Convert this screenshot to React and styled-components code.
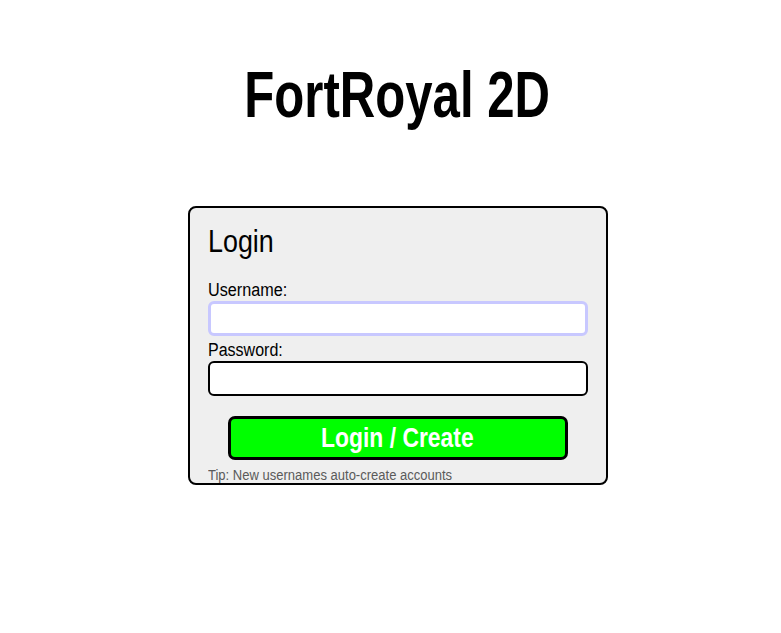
import styled, { createGlobalStyle } from "styled-components";

const GlobalStyle = createGlobalStyle`
    body {
        margin: 0;
        background: #ffffff;
        font-family: "Liberation Sans", Arial, sans-serif;
    }
`;

const App = () => {
    return (
        <>
            <GlobalStyle />
            <Page>
                <Title>
                    <Narrow scale={0.768} origin="center">FortRoyal 2D</Narrow>
                </Title>
                <Card>
                    <CardTitle>
                        <Narrow scale={0.84}>Login</Narrow>
                    </CardTitle>
                    <Label htmlFor="username">
                        <Narrow scale={0.9}>Username:</Narrow>
                    </Label>
                    <Input id="username" type="text" focused />
                    <Label htmlFor="password">
                        <Narrow scale={0.89}>Password:</Narrow>
                    </Label>
                    <Input id="password" type="password" />
                    <ButtonRow>
                        <SubmitButton type="button">
                            <Narrow scale={0.817} origin="center">Login / Create</Narrow>
                        </SubmitButton>
                    </ButtonRow>
                    <Tip>
                        <Narrow scale={0.93}>Tip: New usernames auto-create accounts</Narrow>
                    </Tip>
                </Card>
            </Page>
        </>
    );
};

export default App;

// the reference uses a narrow face; squeeze Liberation Sans to match
const Narrow = styled.span`
    display: inline-block;
    white-space: nowrap;
    transform: scaleX(${(p) => p.scale || 1});
    transform-origin: ${(p) => p.origin || "left"} center;
`;

const Page = styled.div`
    display: flex;
    flex-direction: column;
    align-items: center;
    padding: 58px 0 0 14px;
`;

const Title = styled.h1`
    margin: 0 0 74px;
    font-size: 64px;
    font-weight: bold;
    color: #000;
    line-height: 74px;
`;

const Card = styled.div`
    width: 420px;
    box-sizing: border-box;
    background-color: #efefef;
    border: 2px solid #000;
    border-radius: 8px;
    padding: 15px 18px 0;
    display: flex;
    flex-direction: column;
`;

const CardTitle = styled.h2`
    margin: 0 0 19px;
    font-size: 32px;
    font-weight: normal;
    line-height: 37px;
`;

const Label = styled.label`
    font-size: 18px;
    line-height: 22px;
    color: #000;
`;

const Input = styled.input`
    box-sizing: border-box;
    width: 100%;
    height: 35px;
    margin: 0 0 3px;
    background: #fff;
    border: ${(p) => (p.focused ? "3px solid #c8c8ff" : "2px solid #000")};
    border-radius: 6px;
    outline: none;
    font-size: 18px;
`;

const ButtonRow = styled.div`
    display: flex;
    justify-content: center;
    margin-top: 17px;
`;

const SubmitButton = styled.button`
    width: 340px;
    height: 44px;
    padding: 0;
    background-color: #00ff00;
    border: 3px solid #000;
    border-radius: 7px;
    color: #fff;
    font-family: inherit;
    font-size: 28px;
    font-weight: bold;
    cursor: pointer;
`;

const Tip = styled.p`
    margin: 7px 0 0;
    font-size: 14px;
    line-height: 16px;
    color: #5a5a5a;
`;
